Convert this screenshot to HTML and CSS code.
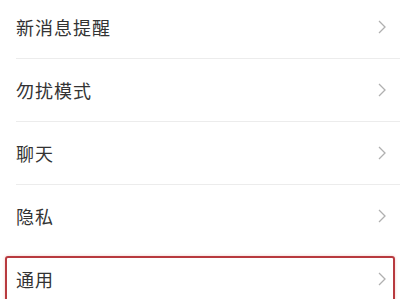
FILE: index.html
```html
<!DOCTYPE html>
<html lang="zh">
<head>
<meta charset="utf-8">
<link rel="stylesheet" href="styles.css">
</head>
<body>
<ul class="list">
  <li class="row"><span class="label">新消息提醒</span><svg class="chev" viewBox="0 0 8 14"><path d="M1 1 L7 7 L1 13"/></svg></li>
  <li class="row"><span class="label">勿扰模式</span><svg class="chev" viewBox="0 0 8 14"><path d="M1 1 L7 7 L1 13"/></svg></li>
  <li class="row"><span class="label">聊天</span><svg class="chev" viewBox="0 0 8 14"><path d="M1 1 L7 7 L1 13"/></svg></li>
  <li class="row plain"><span class="label">隐私</span><svg class="chev" viewBox="0 0 8 14"><path d="M1 1 L7 7 L1 13"/></svg></li>
  <li class="row plain selected"><span class="label">通用</span><svg class="chev" viewBox="0 0 8 14"><path d="M1 1 L7 7 L1 13"/></svg><span class="mark"></span></li>
</ul>
</body>
</html>
```
FILE: styles.css
```css
html, body {
  margin: 0;
  padding: 0;
  background: #ffffff;
  overflow: hidden;
}
body {
  font-family: "Noto Sans CJK SC", "Noto Sans", sans-serif;
  color: #333333;
}
.list {
  list-style: none;
  margin: -4px 0 0 0;
  padding: 0 0 0 16px;
}
.row {
  position: relative;
  height: 62px;
  display: flex;
  align-items: center;
  justify-content: space-between;
  border-bottom: 1px solid #ececec;
  padding-right: 14px;
}
.row.plain {
  border-bottom: 1px solid transparent;
}
.label {
  font-size: 18px;
  line-height: 1;
  letter-spacing: 1px;
}
.chev {
  width: 8px;
  height: 14px;
  fill: none;
  stroke: #b0b0b0;
  stroke-width: 1.3;
}
.mark {
  position: absolute;
  top: 8px;
  left: -11px;
  right: 5px;
  height: 60px;
  border: 2px solid #b83a3f;
  border-radius: 3px;
  box-shadow: 0 0 3px rgba(230, 150, 140, 0.5);
}
```
